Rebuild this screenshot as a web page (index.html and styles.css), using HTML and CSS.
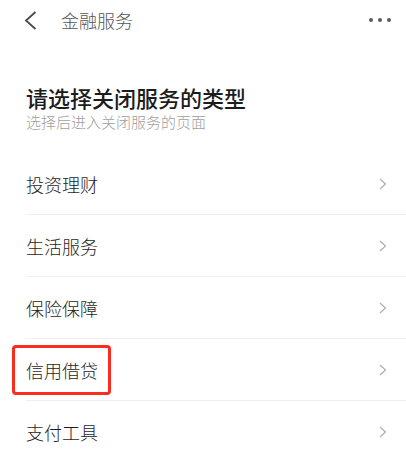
FILE: index.html
```html
<!DOCTYPE html>
<html lang="zh-CN">
<head>
<meta charset="utf-8">
<title>金融服务</title>
<link rel="stylesheet" href="styles.css">
</head>
<body>
<div class="page">
  <header class="nav">
    <svg class="back" width="13" height="19" viewBox="0 0 13 19"><polyline points="11.5,1 2,9.5 11.5,18" fill="none" stroke="#4a4a4a" stroke-width="1.8" stroke-linejoin="miter"/></svg>
    <span class="nav-title">金融服务</span>
    <div class="more"><i></i><i></i><i></i></div>
  </header>
  <section class="intro">
    <h1 class="heading">请选择关闭服务的类型</h1>
    <p class="sub">选择后进入关闭服务的页面</p>
  </section>
  <ul class="list">
    <li class="row"><span class="label">投资理财</span><svg class="chev" width="8" height="12" viewBox="0 0 8 12"><polyline points="1,1 6.5,6 1,11" fill="none" stroke="#aaaaaa" stroke-width="1.1"/></svg></li>
    <li class="row"><span class="label">生活服务</span><svg class="chev" width="8" height="12" viewBox="0 0 8 12"><polyline points="1,1 6.5,6 1,11" fill="none" stroke="#aaaaaa" stroke-width="1.1"/></svg></li>
    <li class="row"><span class="label">保险保障</span><svg class="chev" width="8" height="12" viewBox="0 0 8 12"><polyline points="1,1 6.5,6 1,11" fill="none" stroke="#aaaaaa" stroke-width="1.1"/></svg></li>
    <li class="row marked"><span class="label">信用借贷</span><span class="mark"></span><svg class="chev" width="8" height="12" viewBox="0 0 8 12"><polyline points="1,1 6.5,6 1,11" fill="none" stroke="#aaaaaa" stroke-width="1.1"/></svg></li>
    <li class="row"><span class="label">支付工具</span><svg class="chev" width="8" height="12" viewBox="0 0 8 12"><polyline points="1,1 6.5,6 1,11" fill="none" stroke="#aaaaaa" stroke-width="1.1"/></svg></li>
  </ul>
</div>
</body>
</html>
```
FILE: styles.css
```css
html, body {
  margin: 0;
  padding: 0;
  background: #ffffff;
}
body {
  font-family: "Noto Sans CJK SC", "Noto Sans", sans-serif;
  width: 406px;
  height: 457px;
  overflow: hidden;
}
.page {
  display: flex;
  flex-direction: column;
}
.nav {
  height: 40px;
  display: flex;
  align-items: center;
  padding: 0 15px 0 24px;
}
.back {
  display: block;
  flex: none;
}
.nav-title {
  margin-left: 24px;
  font-size: 18px;
  color: #555555;
  line-height: 24px;
  font-weight: 300;
}
.more {
  margin-left: auto;
  display: flex;
  gap: 5px;
  align-items: center;
}
.more i {
  display: block;
  width: 4px;
  height: 4px;
  border-radius: 50%;
  background: #5a5a5a;
}
.intro {
  padding-left: 26px;
  margin-top: 42px;
}
.heading {
  margin: 0;
  font-size: 22px;
  line-height: 30px;
  font-weight: 500;
  color: #1c1c1c;
}
.sub {
  margin: 0;
  font-size: 15px;
  line-height: 20px;
  color: #a0a0a0;
  font-weight: 300;
}
.list {
  list-style: none;
  margin: 21px 0 0 26px;
  padding: 0;
}
.row {
  position: relative;
  height: 61px;
  border-bottom: 1px solid #efefef;
  display: flex;
  align-items: center;
  justify-content: space-between;
  padding-right: 19px;
}
.label {
  font-size: 18px;
  line-height: 24px;
  color: #1e1e1e;
  font-weight: 300;
}
.chev {
  display: block;
  flex: none;
}
.mark {
  position: absolute;
  left: -14px;
  top: 6px;
  width: 93px;
  height: 44px;
  border: 3px solid #fa2c1e;
  border-radius: 4px;
}
```
